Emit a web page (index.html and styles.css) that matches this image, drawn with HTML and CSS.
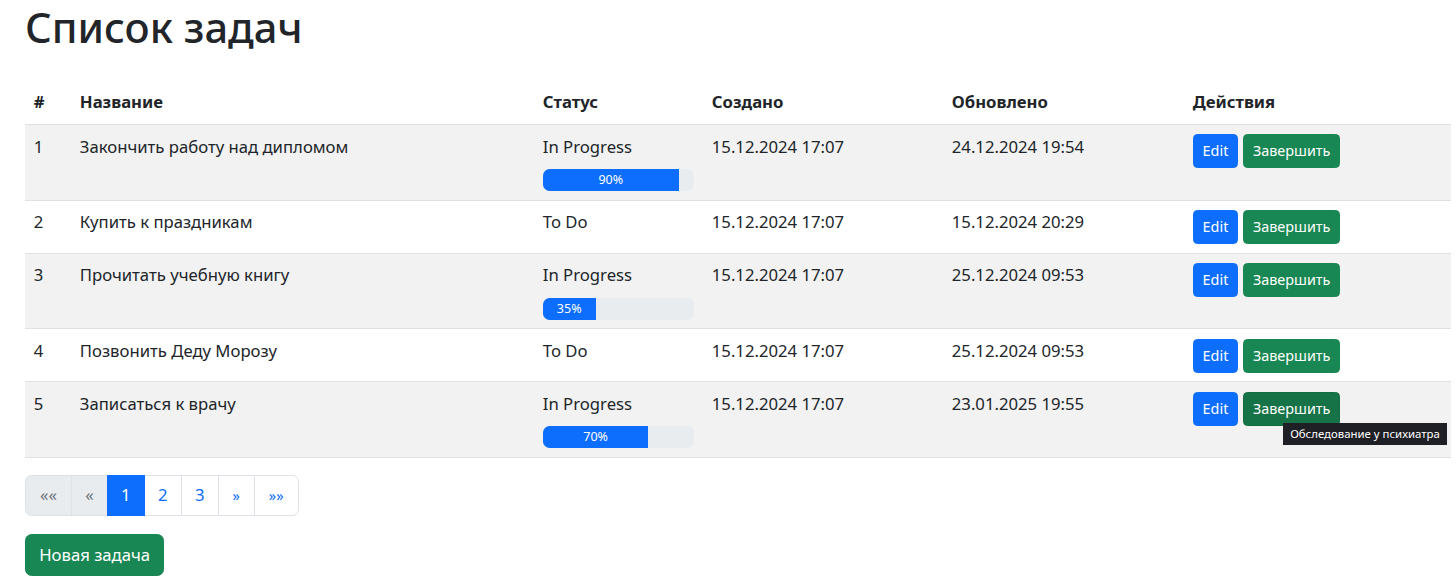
FILE: index.html
```html
<!DOCTYPE html>
<html lang="ru">
<head>
<meta charset="utf-8">
<title>Список задач</title>
<link rel="stylesheet" href="styles.css">
</head>
<body>
<div class="page">
  <h1 class="title">Список задач</h1>
  <table class="tasks">
    <colgroup>
      <col class="c-num"><col class="c-name"><col class="c-status"><col class="c-created"><col class="c-updated"><col class="c-actions">
    </colgroup>
    <thead>
      <tr><th>#</th><th>Название</th><th>Статус</th><th>Создано</th><th>Обновлено</th><th>Действия</th></tr>
    </thead>
    <tbody>
      <tr class="odd">
        <td>1</td><td>Закончить работу над дипломом</td>
        <td>In Progress<div class="progress"><div class="bar" style="width:90%">90%</div></div></td>
        <td>15.12.2024 17:07</td><td>24.12.2024 19:54</td>
        <td><div class="actions"><button class="btn btn-sm btn-primary">Edit</button><button class="btn btn-sm btn-success">Завершить</button></div></td>
      </tr>
      <tr>
        <td>2</td><td>Купить к праздникам</td>
        <td>To Do</td>
        <td>15.12.2024 17:07</td><td>15.12.2024 20:29</td>
        <td><div class="actions"><button class="btn btn-sm btn-primary">Edit</button><button class="btn btn-sm btn-success">Завершить</button></div></td>
      </tr>
      <tr class="odd">
        <td>3</td><td>Прочитать учебную книгу</td>
        <td>In Progress<div class="progress"><div class="bar" style="width:35%">35%</div></div></td>
        <td>15.12.2024 17:07</td><td>25.12.2024 09:53</td>
        <td><div class="actions"><button class="btn btn-sm btn-primary">Edit</button><button class="btn btn-sm btn-success">Завершить</button></div></td>
      </tr>
      <tr>
        <td>4</td><td>Позвонить Деду Морозу</td>
        <td>To Do</td>
        <td>15.12.2024 17:07</td><td>25.12.2024 09:53</td>
        <td><div class="actions"><button class="btn btn-sm btn-primary">Edit</button><button class="btn btn-sm btn-success">Завершить</button></div></td>
      </tr>
      <tr class="odd">
        <td>5</td><td>Записаться к врачу</td>
        <td>In Progress<div class="progress"><div class="bar" style="width:70%">70%</div></div></td>
        <td>15.12.2024 17:07</td><td>23.01.2025 19:55</td>
        <td><div class="actions"><button class="btn btn-sm btn-primary">Edit</button><span class="tip-wrap"><button class="btn btn-sm btn-success hover">Завершить</button><span class="tooltip">Обследование у психиатра</span></span></div></td>
      </tr>
    </tbody>
  </table>
  <nav class="pagination">
    <span class="page-item disabled first">&laquo;&laquo;</span>
    <span class="page-item disabled">&laquo;</span>
    <span class="page-item active">1</span>
    <a class="page-item" href="#">2</a>
    <a class="page-item" href="#">3</a>
    <a class="page-item small next" href="#">&raquo;</a>
    <a class="page-item small last" href="#">&raquo;&raquo;</a>
  </nav>
  <button class="btn btn-success btn-new">Новая задача</button>
</div>
</body>
</html>
```
FILE: styles.css
```css
* { box-sizing: border-box; }
html, body { margin: 0; padding: 0; }
body {
  font-family: "Noto Sans", "Liberation Sans", sans-serif;
  font-size: 16.7px;
  line-height: 26.4px;
  color: #212529;
  background: #fff;
}
.page {
  padding: 0 5px 0 25px;
}
.title {
  font-size: 41.7px;
  font-weight: 500;
  line-height: 52.8px;
  margin: 0 0 26px 0;
  padding-top: 1px;
}
.tasks {
  width: 1426px;
  border-collapse: collapse;
  margin-bottom: 16.6px;
}
.c-num { width: 46px; }
.c-name { width: 463px; }
.c-status { width: 169px; }
.c-created { width: 240px; }
.c-updated { width: 241px; }
.c-actions { width: 267px; }
.tasks th, .tasks td {
  padding: 8.8px;
  text-align: left;
  vertical-align: top;
  border-bottom: 1px solid #dee2e6;
}
.tasks th { font-weight: 700; }
.tasks tr.odd td { background: #f2f2f2; }
.progress {
  margin-top: 8.8px;
  width: 151px;
  height: 22px;
  background: #e9ecef;
  border-radius: 6.6px;
  overflow: hidden;
  display: flex;
}
.bar {
  background: #0d6efd;
  color: #fff;
  font-size: 12.5px;
  line-height: 22px;
  text-align: center;
  white-space: nowrap;
}
.actions {
  display: flex;
  gap: 5px;
  padding-top: 0.5px;
}
.btn {
  display: inline-block;
  font-family: inherit;
  border: 1px solid transparent;
  color: #fff;
  cursor: pointer;
  font-size: 16.7px;
  line-height: 26.4px;
  padding: 6.6px 13.2px;
  border-radius: 6.6px;
}
.btn-sm {
  font-size: 14.4px;
  line-height: 23.1px;
  padding: 4.4px 8.8px;
  border-radius: 4.4px;
}
.btn-primary { background: #0d6efd; border-color: #0d6efd; }
.btn-success { background: #198754; border-color: #198754; }
.btn-success.hover { background: #157347; border-color: #146c43; }
.tip-wrap { position: relative; display: inline-block; }
.tooltip {
  position: absolute;
  left: 40px;
  top: 31px;
  white-space: nowrap;
  background: #1f1f26;
  color: #fff;
  font-size: 11.4px;
  line-height: 16px;
  padding: 3px 7px;
  z-index: 5;
}
.pagination {
  display: flex;
  margin-bottom: 17.6px;
}
.page-item {
  display: block;
  padding: 6.6px 13.2px;
  font-size: 16.7px;
  line-height: 26.4px;
  color: #0d6efd;
  background: #fff;
  border: 1px solid #dee2e6;
  text-decoration: none;
  margin-left: -1px;
  text-align: center;
}
.page-item:first-child { margin-left: 0; border-radius: 6.6px 0 0 6.6px; }
.page-item:last-child { border-radius: 0 6.6px 6.6px 0; }
.page-item.disabled { color: #6c757d; background: #e9ecef; }
.page-item.active { color: #fff; background: #0d6efd; border-color: #0d6efd; z-index: 1; }
.page-item.small { font-size: 14.5px; }
.page-item.first { width: 47px; padding-left: 0; padding-right: 0; }
.page-item.next { width: 37px; padding-left: 0; padding-right: 0; }
.page-item.last { width: 45px; padding-left: 0; padding-right: 0; }
.btn-new { margin: 0; }
```
